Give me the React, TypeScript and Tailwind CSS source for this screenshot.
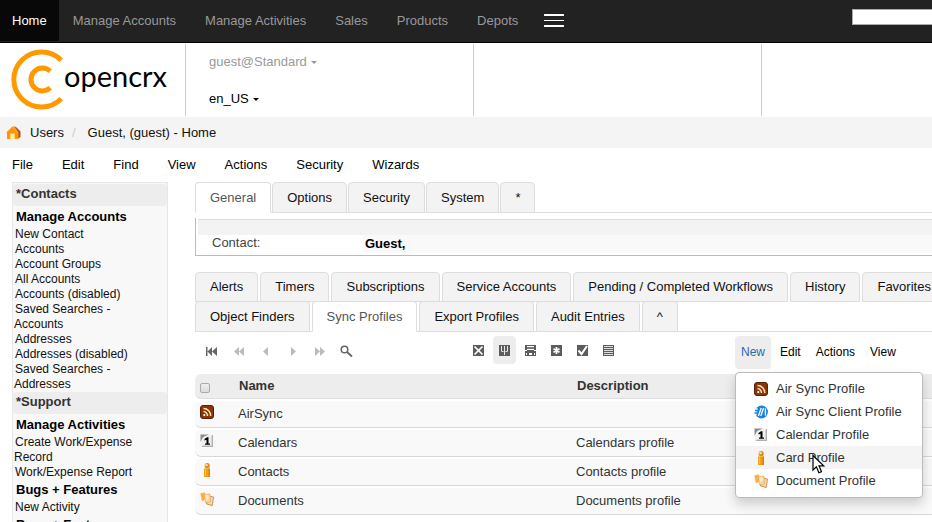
import React from 'react';

const NAV = ['Manage Accounts', 'Manage Activities', 'Sales', 'Products', 'Depots'];
const MENU = ['File', 'Edit', 'Find', 'View', 'Actions', 'Security', 'Wizards'];

const SIDEBAR = [
  {
    title: '*Contacts',
    groups: [
      {
        title: 'Manage Accounts',
        links: [
          'New Contact',
          'Accounts',
          'Account Groups',
          'All Accounts',
          'Accounts (disabled)',
          'Saved Searches - Accounts',
          'Addresses',
          'Addresses (disabled)',
          'Saved Searches - Addresses',
        ],
      },
    ],
  },
  {
    title: '*Support',
    groups: [
      { title: 'Manage Activities', links: ['Create Work/Expense Record', 'Work/Expense Report'] },
      { title: 'Bugs + Features', links: ['New Activity'] },
      { title: 'Bugs + Features', links: [] },
    ],
  },
];

const MAIN_TABS = ['General', 'Options', 'Security', 'System', '*'];
const GRID_TABS_TOP = [
  'Alerts',
  'Timers',
  'Subscriptions',
  'Service Accounts',
  'Pending / Completed Workflows',
  'History',
  'Favorites',
];
const GRID_TABS_BOTTOM = ['Object Finders', 'Sync Profiles', 'Export Profiles', 'Audit Entries', '^'];

function Logo() {
  return (
    <a href="#" aria-label="opencrx" className="flex w-[185px] shrink-0 items-center pb-0.5 pl-2.5">
      <svg width="54" height="64" viewBox="0 0 54 64" fill="none" stroke="#ff9900">
        <path d="M51.2 13.2A27.6 27.6 0 1 0 51.2 51.8" strokeWidth="5" />
        <path d="M40.200 24.200A11.400 11.400 0 1 0 40.200 40.800" strokeWidth="5" />
      </svg>
      <span className="pb-1.5 font-[Lato] text-[29px] leading-8 text-black">opencrx</span>
    </a>
  );
}

function Caret() {
  return (
    <svg width="6" height="3" viewBox="0 0 6 3">
      <path d="M0 0h6L3 3z" fill="currentColor" />
    </svg>
  );
}

function HouseIcon() {
  return (
    <svg width="15" height="14" viewBox="0 0 15 14">
      <path d="M8 0.500l2 .5 4.500 4.500V11l-3 2V7z" fill="#a8501c" />
      <path d="M0.300 6.500L6.800 0.300 9 1l3.500 5.500V13H1V7z" fill="#ff9310" />
      <path d="M4.200 7.500h4.500V13H4.200z" fill="#ffee8a" />
      <path d="M0.600 6.800l6-5.800L12 7" fill="none" stroke="#ffa938" />
    </svg>
  );
}

function FeedIcon() {
  return (
    <svg width="14" height="14" viewBox="0 0 14 14">
      <rect x="0.5" y="0.5" width="13" height="13" rx="2.5" fill="#8d3306" stroke="#54220c" />
      <g fill="none" stroke="#ffe3b0" strokeWidth="1.5">
        <path d="M3.5 3.4a7.2 7.2 0 0 1 7.2 7.6" />
        <path d="M3.5 6.6a4.2 4.2 0 0 1 4 4.4" />
      </g>
      <circle cx="4.3" cy="10.1" r="1.1" fill="#fff" />
    </svg>
  );
}

function ClientIcon() {
  return (
    <svg width="14" height="14" viewBox="0 0 14 14">
      <circle cx="7.500" cy="7" r="6.400" fill="#1580e0" />
      <path d="M0 3.500h4L2.500 10H0z" fill="#fff" />
      <path d="M1 5.500h3M0.500 8h3" stroke="#1580e0" strokeWidth="1.500" />
      <g stroke="#fff" strokeWidth="1.300">
        <path d="M7.200 3L4.400 11" />
        <path d="M9.600 3L6.800 11" />
        <path d="M11.400 3.500v7" />
      </g>
    </svg>
  );
}

function CalendarIcon() {
  return (
    <svg width="14" height="14" viewBox="0 0 14 14">
      <rect x="1" y="1" width="12" height="12" fill="#f0f0f0" />
      <path d="M12.500 1v12M2 12.500h11" stroke="#b0b0b0" />
      <path d="M11.500 2v10M3 11.500h9" stroke="#d4d4d4" />
      <path d="M0.500 0.500H9L4 2.500 2.500 4 0.500 8z" fill="#8a8a8a" />
      <path d="M4.500 5L7 3.200h1.500V9.500H10v1.200H5V9.500h1.500V5.800L4.500 6.500z" fill="#000" />
    </svg>
  );
}

function PersonIcon() {
  return (
    <svg width="14" height="14" viewBox="0 0 14 14">
      <path d="M4 5.500h6V14H4z" fill="#f59c14" />
      <path d="M8.500 5.500H10V14H8.500z" fill="#de8206" />
      <circle cx="7.200" cy="2.700" r="2.600" fill="#e08a1c" />
      <circle cx="6.500" cy="2" r="1.300" fill="#ffdf9c" />
      <path d="M5.500 6.500v6.500" stroke="#ffc04a" strokeWidth="1.300" />
    </svg>
  );
}

function DocumentsIcon() {
  return (
    <svg width="14" height="14" viewBox="0 0 14 14">
      <path d="M8 4l5.5 1-1.2 8.500-5.800-1.500z" fill="#f9d9a5" stroke="#bd7d45" strokeWidth="0.800" />
      <path d="M4.500 2.500L10 2l.5 8-5 .8z" fill="#fdd592" stroke="#dfa05a" strokeWidth="0.600" />
      <path d="M0.500 1.500L4.800.6 6.300 7 2 9.200z" fill="#f8ac4c" stroke="#f8c988" strokeWidth="0.600" />
      <path d="M5 3.500l3-1 1 4-3 2z" fill="#ffeccb" />
    </svg>
  );
}

const ROWS = [
  { icon: FeedIcon, name: 'AirSync', description: '' },
  { icon: CalendarIcon, name: 'Calendars', description: 'Calendars profile' },
  { icon: PersonIcon, name: 'Contacts', description: 'Contacts profile' },
  { icon: DocumentsIcon, name: 'Documents', description: 'Documents profile' },
];

const NEW_MENU = [
  { icon: FeedIcon, label: 'Air Sync Profile', active: false },
  { icon: ClientIcon, label: 'Air Sync Client Profile', active: false },
  { icon: CalendarIcon, label: 'Calendar Profile', active: false },
  { icon: PersonIcon, label: 'Card Profile', active: true },
  { icon: DocumentsIcon, label: 'Document Profile', active: false },
];

const PAGER = [
  {
    label: 'First page',
    muted: false,
    art: <path d="M1 2h1.500v9H1zM7 2v9L2.500 6.500zM12 2v9L7 6.500z" />,
  },
  { label: 'Fast back', muted: true, art: <path d="M7 2v9L2 6.500zM12 2v9L7 6.500z" /> },
  { label: 'Previous', muted: true, art: <path d="M9 2v9L4 6.500z" /> },
  { label: 'Next', muted: true, art: <path d="M5 2v9l5-4.500z" /> },
  { label: 'Fast forward', muted: true, art: <path d="M2 2v9l5-4.500zM7 2v9l5-4.500z" /> },
  {
    label: 'Search',
    muted: false,
    art: (
      <g fill="none" stroke="currentColor">
        <circle cx="4.500" cy="4.500" r="3.300" strokeWidth="1.500" />
        <path d="M7 7l5 4.500" strokeWidth="1.800" />
      </g>
    ),
  },
];

const TOOLS = [
  {
    label: 'Clear filter',
    art: <path d="M1.500 1.500l8 8M9.500 1.500l-8 8" stroke="#fff" strokeWidth="1.700" />,
  },
  {
    label: 'Columns',
    art: <path d="M2.500 1v5M5.500 1v9M8.500 1v5M2.500 6.500h2M6.500 6.500h2" stroke="#e8e8e8" />,
  },
  {
    label: 'Layout',
    art: (
      <g fill="#fff">
        <path d="M2 1h7v1H2zM2 4h7v1H2zM0 5h2v1H0zM9 5h2v1H9z" />
        <path d="M2 2h7v2H2z" fill="#777" />
        <path d="M1 8h1v2H1zM4 8h3v2H4zM9 8h1v2H9z" />
      </g>
    ),
  },
  {
    label: 'Show all',
    art: <path d="M5.500 2v7M2.500 3.700l6 3.600M8.500 3.700l-6 3.600" stroke="#fff" strokeWidth="1.700" />,
  },
  {
    label: 'Select',
    art: <path d="M1.500 5.500L4.500 9 10 1" fill="none" stroke="#fff" strokeWidth="2" />,
  },
  {
    label: 'List',
    art: <path d="M1 1.500h9M1 3.500h9M1 5.500h9M1 7.500h9M1 9.500h9" stroke="#ddd" />,
  },
];

function Tab({ label, active, tall }: { label: string; active?: boolean; tall?: boolean }) {
  return (
    <button
      type="button"
      className={`shrink-0 rounded-t border border-[#ddd] px-3.5 whitespace-nowrap ${
        tall ? '-mb-px h-[31px]' : 'h-[30px]'
      } ${active ? 'border-b-white bg-white text-[#555]' : 'bg-[#f3f3f3] text-[#111]'}`}
    >
      {label}
    </button>
  );
}

export default function App() {
  return (
    <div className="h-screen overflow-hidden bg-white font-['Liberation_Sans',Arial,sans-serif] text-[13px] leading-5 text-[#111]">
      <nav className="flex h-[43px] items-start border-b border-black bg-[#222] text-[#999]">
        <a href="#" className="flex h-[41px] items-center bg-[#080808] px-3 text-white">
          Home
        </a>
        <div className="flex gap-px">
          {NAV.map((item) => (
            <a key={item} href="#" className="flex h-[41px] items-center px-3.5 whitespace-nowrap">
              {item}
            </a>
          ))}
        </div>
        <button type="button" aria-label="More" className="flex h-[41px] items-center px-3">
          <svg width="20" height="13" viewBox="0 0 20 13" fill="#fff">
            <rect width="20" height="2" rx="0.500" />
            <rect y="6" width="20" height="1" />
            <rect y="11" width="20" height="2" rx="0.500" />
          </svg>
        </button>
        <input
          type="search"
          aria-label="Search"
          className="mt-[9px] ml-auto h-4 w-20 border border-r-0 border-[#aaa] bg-white text-black"
        />
      </nav>

      <header className="flex h-[74px] py-px">
        <Logo />
        <div className="flex w-72 shrink-0 flex-col items-start gap-[17px] border-l border-[#ccc] pt-2 pl-[23px]">
          <button type="button" className="flex items-center gap-1 text-[#999]">
            guest@Standard <Caret />
          </button>
          <button type="button" className="flex items-center gap-1 text-black">
            en_US <Caret />
          </button>
        </div>
        <div className="w-72 shrink-0 border-l border-[#ccc]" />
        <div className="flex-1 border-l border-[#ccc]" />
      </header>

      <div className="flex h-[31px] items-center bg-[#f4f4f4] pl-1.5">
        <HouseIcon />
        <a href="#" className="ml-[9px]">
          Users
        </a>
        <span className="px-2 text-[#ccc]">/</span>
        <a href="#" className="ml-1">
          Guest, (guest) - Home
        </a>
      </div>

      <div className="flex h-[34px] items-center gap-[29px] pl-3">
        {MENU.map((item) => (
          <button key={item} type="button" className="text-black">
            {item}
          </button>
        ))}
      </div>

      <div className="flex items-start">
        <aside className="ml-3 w-[156px] shrink-0 border border-[#e7e7e7] bg-[#f8f8f8] pt-px">
          {SIDEBAR.map((section) => (
            <section key={section.title}>
              <h2 className="mb-px h-[22px] rounded bg-[#ededed] pl-[3px] leading-5 font-bold text-[#333]">
                {section.title}
              </h2>
              {section.groups.map((group, i) => (
                <div key={i}>
                  <h3 className="pl-[3px] font-bold text-black">{group.title}</h3>
                  <ul className="pr-2 pl-px text-xs leading-[15px]">
                    {group.links.map((link) => (
                      <li key={link} className="indent-px">
                        <a href="#">{link}</a>
                      </li>
                    ))}
                  </ul>
                </div>
              ))}
            </section>
          ))}
        </aside>

        <main className="ml-[27px] min-w-0 flex-1">
          <div className="flex gap-px border-b border-[#ddd]">
            {MAIN_TABS.map((tab) => (
              <Tab key={tab} label={tab} active={tab === 'General'} tall />
            ))}
          </div>

          <div className="mt-[5px] border-b border-l border-[#bbb] pt-px pb-0.5 pl-0.5">
            <div className="h-4 border-t border-[#ddd] bg-[#f3f3f3]" />
            <div className="flex h-[18px]">
              <span className="w-[165px] pl-3.5 leading-4 text-[#444]">Contact:</span>
              <span className="h-full flex-1 bg-[#f9f9f9] pl-0.5 leading-[18px] font-bold text-black">Guest,</span>
            </div>
          </div>

          <div className="mt-4">
            <div className="-mb-px flex gap-0.5 overflow-hidden">
              {GRID_TABS_TOP.map((tab) => (
                <Tab key={tab} label={tab} />
              ))}
            </div>
            <div className="flex gap-0.5 border-b border-[#ddd]">
              {GRID_TABS_BOTTOM.map((tab) => (
                <Tab key={tab} label={tab} active={tab === 'Sync Profiles'} tall />
              ))}
            </div>
          </div>

          <div className="grid h-[42px] grid-cols-[272px_268px_1fr] items-start pt-1">
            <div className="flex pl-[3px]">
              {PAGER.map((p) => (
                <button
                  key={p.label}
                  type="button"
                  aria-label={p.label}
                  className={`flex h-[30px] w-[27px] items-center justify-center ${
                    p.muted ? 'text-[#bbb]' : 'text-[#666]'
                  }`}
                >
                  <svg width="13" height="13" viewBox="0 0 13 13" fill="currentColor">
                    {p.art}
                  </svg>
                </button>
              ))}
            </div>
            <div className="flex gap-[3px]">
              {TOOLS.map((t) => (
                <button
                  key={t.label}
                  type="button"
                  aria-label={t.label}
                  className={`flex h-7 w-[23px] items-center justify-center rounded ${
                    t.label === 'Columns' ? 'bg-[#ededed]' : ''
                  }`}
                >
                  <svg width="11" height="11" viewBox="0 0 11 11">
                    <rect width="11" height="11" fill="#5c5c5c" />
                    {t.art}
                  </svg>
                </button>
              ))}
            </div>
            <div className="flex gap-[3px] text-xs">
              <div className="relative">
                <button type="button" className="h-[33px] rounded bg-[#ededed] px-1.5 pb-0.5 text-[#2a6aad]">
                  New
                </button>
                <ul className="absolute top-full left-0 z-10 mt-[3px] w-[188px] rounded border border-[#bbb] bg-white pt-1 pb-[5px] text-[13px] shadow-[0_6px_12px_rgba(0,0,0,0.18)]">
                  {NEW_MENU.map((item) => (
                    <li key={item.label}>
                      <a
                        href="#"
                        className={`flex h-[23px] items-center gap-2 pl-[18px] text-[#333] ${
                          item.active ? 'bg-[#f4f4f4]' : ''
                        }`}
                      >
                        <item.icon />
                        {item.label}
                      </a>
                    </li>
                  ))}
                  <li className="pointer-events-none absolute top-[81px] left-[76px]" aria-hidden="true">
                    <svg width="14" height="21" viewBox="0 0 14 21">
                      <path
                        d="M1 1.500V16l3.400-3.200 2.500 6 2.600-1.100-2.500-5.900h4.700z"
                        fill="#fff"
                        stroke="#000"
                        strokeWidth="1.200"
                      />
                    </svg>
                  </li>
                </ul>
              </div>
              {['Edit', 'Actions', 'View'].map((item) => (
                <button key={item} type="button" className="h-[33px] px-1.5 pb-0.5 text-black">
                  {item}
                </button>
              ))}
            </div>
          </div>

          <table className="-mt-0.5 w-full table-fixed border-separate border-spacing-x-0 border-spacing-y-0.5 text-left text-[#333]">
            <thead>
              <tr className="h-[25px]">
                <th className="w-[43px] rounded-l-md border-b border-[#ddd] bg-[#ededed] p-0 pt-1 pl-[5px]">
                  <input
                    type="checkbox"
                    aria-label="Select all"
                    className="block size-[10px] appearance-none rounded-xs border border-[#aaa] bg-linear-to-b from-[#eee] to-[#ddd]"
                  />
                </th>
                <th className="w-[338px] border-b border-[#ddd] bg-[#ededed] p-0 pl-px">Name</th>
                <th className="border-b border-[#ddd] bg-[#ededed] p-0 pl-px">Description</th>
              </tr>
            </thead>
            <tbody>
              {ROWS.map((row) => (
                <tr key={row.name} className="h-[27px]">
                  <td className="rounded-l-md border-b border-[#d8d8d8] bg-[#f9f9f9] p-0 pb-1 pl-[5px]">
                    <row.icon />
                  </td>
                  <td className="border-b border-[#d8d8d8] bg-[#f9f9f9] p-0">{row.name}</td>
                  <td className="border-b border-[#d8d8d8] bg-[#f9f9f9] p-0">{row.description}</td>
                </tr>
              ))}
            </tbody>
          </table>
        </main>
      </div>
    </div>
  );
}
